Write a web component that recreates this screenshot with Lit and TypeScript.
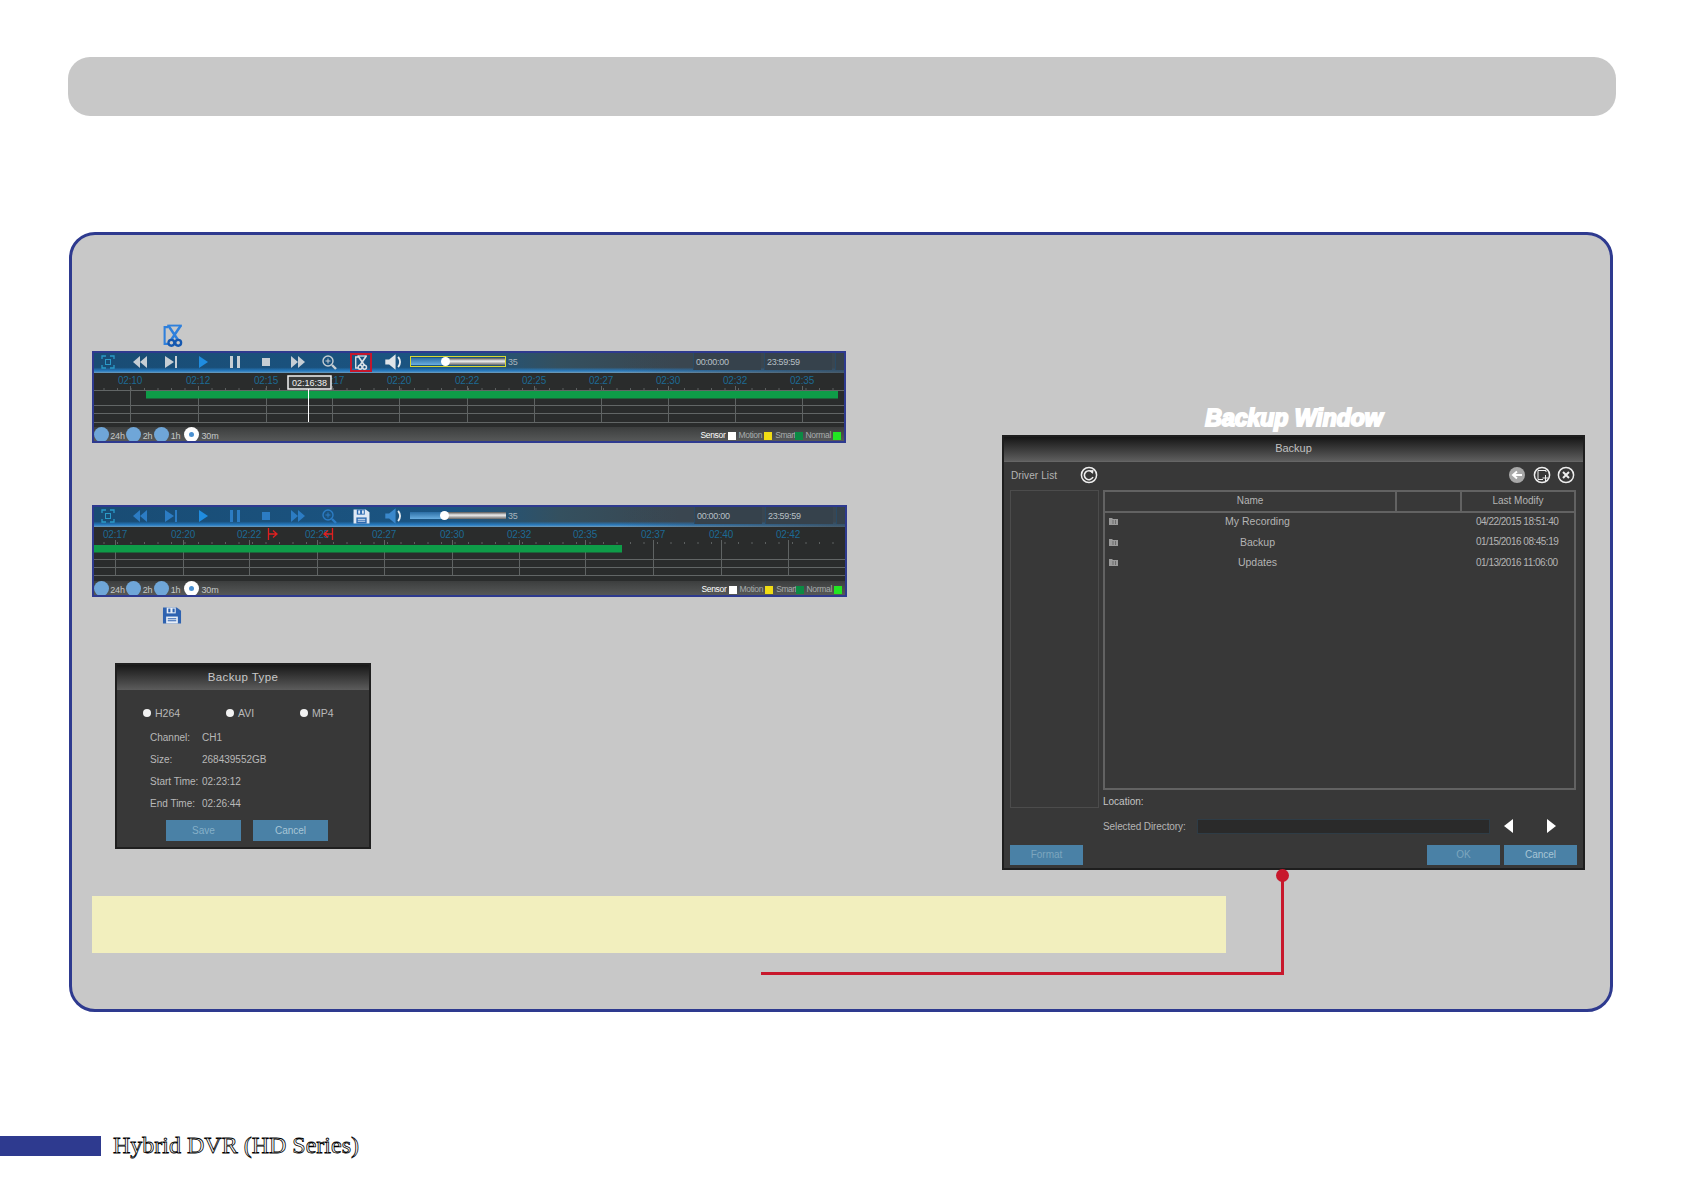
import { LitElement, html, svg, css } from "lit";
import { customElement, property } from "lit/decorators.js";

const ic = (body: unknown, w = 18, h = 16, vb = "0 0 18 16") =>
  html`<svg width=${w} height=${h} viewBox=${vb} aria-hidden="true">${body}</svg>`;

const scissors = (stroke: string, ring: string) => svg`
  <path d="M5 3H1.500v16H5" fill="none" stroke=${stroke} stroke-width="2"/>
  <path d="M5 1.500l9.500 14M17 1.500l-9.500 14" fill="none" stroke=${stroke} stroke-width="2.400"/>
  <path d="M4 1.500h14" stroke=${stroke} stroke-width="1.800"/>
  <circle cx="8" cy="18" r="2.800" fill="none" stroke=${ring} stroke-width="2.200"/>
  <circle cx="14.500" cy="18" r="2.800" fill="none" stroke=${ring} stroke-width="2.200"/>`;

const floppy = (body: string, slot: string) => svg`
  <path d="M1 1h13l4 3v12H1z" fill=${body}/>
  <rect x="4.500" y="1" width="8.500" height="5.500" fill=${slot}/>
  <rect x="6" y="2" width="2" height="3.500" fill=${body}/>
  <rect x="10" y="2" width="2" height="3.500" fill=${body}/>
  <rect x="4" y="9.500" width="11" height="6.500" fill=${slot}/>
  <path d="M5.500 11.500h8M5.500 13.500h8" stroke=${body} stroke-width="1"/>`;

@customElement("dvr-timeline")
class DvrTimeline extends LitElement {
  @property({ type: Boolean }) saved = false;

  static styles = css`
    :host { display: block; box-sizing: border-box; height: 92px; border: 2px solid #2e3a8f; background: #2a2c2c; overflow: hidden; }
    .tools { box-sizing: border-box; height: 20px; padding-bottom: 2px; display: flex; align-items: center;
      background:
        linear-gradient(90deg, rgba(58,70,80,0) 70%, rgba(58,70,80,.75) 100%),
        linear-gradient(180deg, rgba(30,120,190,0) 72%, rgba(40,130,205,.9) 90%, rgba(150,190,215,.7) 100%),
        linear-gradient(90deg, #194c74 0%, #1b5583 48%, #34505f 62%, #3a4650 78%, #3a4650 100%); }
    .slot { width: 31.6px; flex: none; display: flex; justify-content: center; align-items: center; height: 18px; }
    .slot:first-child { margin-left: -1.5px; }
    .cut { box-sizing: border-box; width: 22px; height: 19px; border: 2px solid #c4172c; display: flex; align-items: center; justify-content: center; flex: none; }
    .slider { box-sizing: border-box; width: 96px; height: 11px; flex: none; position: relative; display: flex; align-items: center; margin: -1px 0 0 1.500px; }
    .slider.mark { border: 1px solid #d8d832; }
    .rail { flex: 1; height: 7px; background: linear-gradient(180deg, #555 0%, #eee 45%, #666 100%); }
    .rail i { display: block; width: 36%; height: 100%; background: linear-gradient(180deg, #2c6ea4, #6aaee0); }
    .knob { position: absolute; left: 30px; top: 50%; margin-top: -4.500px; width: 9px; height: 9px; border-radius: 50%; background: #fff; }
    .num { font: 9px "Liberation Sans", sans-serif; letter-spacing: -.3px; color: #a8b4bc; margin-left: 2px; }
    .times { margin-left: auto; display: flex; gap: 3px; height: 17px; align-self: flex-start; }
    .time { box-sizing: border-box; width: 68px; padding-left: 2px; background: #36424c; border-left: 1px solid #2a4a64; font: 9px/18px "Liberation Sans", sans-serif; letter-spacing: -.3px; color: #b8c0c6; }
    .time.end { width: 9px; padding: 0; }
    .track { display: block; }
    .lab { font: 10px "Liberation Sans", sans-serif; fill: #1c6a94; text-anchor: middle; letter-spacing: -.2px; }
    .cur { font: 9px "Liberation Sans", sans-serif; fill: #f0f0f0; text-anchor: middle; }
    .foot { height: 14px; display: flex; align-items: flex-start; justify-content: space-between; overflow: hidden;
      background: linear-gradient(180deg, #3c3e3e, #565858); font: 9px/18px "Liberation Sans", sans-serif; color: #c4c8c8; }
    .zooms { display: flex; align-items: flex-start; }
    .dot { width: 15px; height: 15px; border-radius: 50%; background: #6fa6d8; flex: none; position: relative; }
    .dot.on { background: #fff; margin-left: 2px; }
    .dot.on::after { content: ""; position: absolute; left: 5px; top: 5px; width: 5px; height: 5px; border-radius: 50%; background: #4a90d0; }
    .z { width: 17px; text-align: center; flex: none; letter-spacing: -.2px; }
    .z.n { width: 13px; }
    .z.w { width: 22px; }
    .legend { display: flex; align-items: center; height: 14px; padding: 3px 3px 0 0; box-sizing: border-box; font-size: 8.500px; line-height: 11px; }
    .legend b { font-weight: normal; color: #fff; letter-spacing: -.3px; }
    .legend span { margin-left: 3px; letter-spacing: -.3px; color: #a8acac; }
    .legend i { width: 8px; height: 8px; margin-left: 2px; flex: none; }
    .legend .sm { letter-spacing: -.5px; }
    .legend .gr { margin-left: 0; }
    .legend .no { margin-left: 2px; }
  `;

  render() {
    const s = this.saved;
    const light = s ? "#2c7cc4" : "#c6ced4";
    const labels: [string, number][] = s
      ? [["02:17", 21], ["02:20", 89], ["02:22", 155], ["02:25", 223], ["02:27", 290], ["02:30", 358], ["02:32", 425], ["02:35", 491], ["02:37", 559], ["02:40", 627], ["02:42", 694]]
      : [["02:10", 36], ["02:12", 104], ["02:15", 172], ["02:17", 238], ["02:20", 305], ["02:22", 373], ["02:25", 440], ["02:27", 507], ["02:30", 574], ["02:32", 641], ["02:35", 708]];
    const rows = s ? [32, 40, 48] : [17, 32, 40, 49];
    const bottom = s ? 48 : 49;
    const ticks = Array.from({ length: 56 }, (_, i) => 10 + i * 13.5);
    const tri = (pts: string, fill = light) => svg`<polygon points=${pts} fill=${fill}/>`;
    return html`
      <div class="tools">
        <div class="slot">${ic(svg`<path d="M3 5V2h4M11 2h4v3M15 11v3h-4M7 14H3v-3" fill="none" stroke="#2a9ac8" stroke-width="1.300"/><rect x="6.500" y="5.500" width="5" height="5" fill="none" stroke="#2a9ac8"/>`)}</div>
        <div class="slot">${ic(svg`${tri("9,2 2,8 9,14")}${tri("16,2 9,8 16,14")}`)}</div>
        <div class="slot">${ic(svg`${tri("3,2 12,8 3,14")}<rect x="13" y="2" width="2" height="12" fill=${light}/>`)}</div>
        <div class="slot">${ic(tri("5,2 14,8 5,14", "#1f8ce0"))}</div>
        <div class="slot">${ic(svg`<rect x="4" y="2" width="3" height="12" fill=${light}/><rect x="11" y="2" width="3" height="12" fill=${light}/>`)}</div>
        <div class="slot">${ic(svg`<rect x="5" y="4" width="8" height="8" fill=${light}/>`)}</div>
        <div class="slot">${ic(svg`${tri("2,2 9,8 2,14")}${tri("9,2 16,8 9,14")}`)}</div>
        <div class="slot">${ic(svg`<circle cx="8" cy="7" r="5" fill="none" stroke=${light} stroke-width="1.400"/><path d="M5.500 7h5M8 4.500v5" stroke=${light}/><path d="M12 11l4 4" stroke=${light} stroke-width="2.400"/>`)}</div>
        <div class="slot">${s
          ? ic(floppy("#dfe8f4", "#2c6ab0"), 17, 15, "0.500 0.500 18 16")
          : html`<div class="cut">${ic(scissors("#d8e0e6", "#d8e0e6"), 15, 15, "0 0 20 22")}</div>`}</div>
        <div class="slot">${ic(svg`<path d="M2 6h3l5-4v12l-5-4H2z" fill=${s ? "#3a88cc" : "#dfe4e8"}/><path d="M12 4q3 4 0 8" fill="none" stroke="#e8ecef" stroke-width="1.400"/>`, 18, 18, "1 1 14 14")}</div>
        <div class=${s ? "slider" : "slider mark"}><div class="rail"><i></i></div><div class="knob"></div></div>
        <span class="num">35</span>
        <div class="times"><div class="time">00:00:00</div><div class="time">23:59:59</div><div class="time end"></div></div>
      </div>
      <svg class="track" width="751" height="54" viewBox="0 0 751 54" aria-hidden="false">
        ${ticks.map((x) => svg`<line x1=${x} x2=${x} y1="15" y2="17" stroke="#5c6060"/>`)}
        ${rows.map((y) => svg`<line x1="0" x2="751" y1=${y + 0.5} y2=${y + 0.5} stroke="#626666"/>`)}
        ${labels.map(([, x]) => svg`<line x1=${x + 0.5} x2=${x + 0.5} y1="13" y2=${bottom} stroke="#5f6363"/>`)}
        <rect x=${s ? 0 : 52} y="18" width=${s ? 528 : 692} height="7.500" fill="#0e9c48"/>
        ${labels.map(([t, x]) => svg`<text class="lab" x=${x} y="11">${t}</text>`)}
        ${s
          ? svg`<path d="M174.500 1v12M175 7h8M179 3.500l4 3.500-4 3.500" fill="none" stroke="#e02020" stroke-width="1.300"/>
                <path d="M238.500 1v12M238 7h-8M234 3.500l-4 3.500 4 3.500" fill="none" stroke="#e02020" stroke-width="1.300"/>`
          : svg`<rect x="194" y="3" width="43" height="13" fill="#3a3c3c" stroke="#f4f4f4" stroke-width="1.500"/>
                <text class="cur" x="215.500" y="12.500">02:16:38</text>
                <line x1="214.500" x2="214.500" y1="16" y2="49" stroke="#fff"/>`}
      </svg>
      <div class="foot">
        <div class="zooms">
          <div class="dot"></div><div class="z">24h</div><div class="dot"></div><div class="z n">2h</div><div class="dot"></div><div class="z n">1h</div>
          <div class="dot on"></div><div class="z w">30m</div>
        </div>
        <div class="legend">
          <b>Sensor</b><i style="background:#fff"></i>
          <span>Motion</span><i style="background:#f0dc14"></i>
          <span class="sm">Smart</span><i class="gr" style="background:#0c8a44"></i>
          <span class="no">Normal</span><i style="background:#22e622"></i>
        </div>
      </div>
    `;
  }
}

@customElement("backup-type")
class BackupType extends LitElement {
  static styles = css`
    :host { display: block; box-sizing: border-box; width: 256px; height: 186px; background: #383838; border: 2px solid #1f1f1f; font: 10px "Liberation Sans", sans-serif; color: #b8b8b8; }
    .title { height: 25px; margin-bottom: 1px; background: linear-gradient(180deg, #181818, #5c5c5c); font-size: 11.500px; line-height: 24px; text-align: center; color: #c8c8c8; letter-spacing: .4px; }
    .radios { display: grid; grid-template-columns: 83px 74px 1fr; padding: 15px 0 0 26px; height: 30px; box-sizing: border-box; }
    .r { display: flex; align-items: center; gap: 4px; font-size: 10.500px; height: 14px; }
    .r i { width: 8px; height: 8px; border-radius: 50%; background: #f2f2f2; flex: none; }
    .rows { display: grid; grid-template-columns: 52px 1fr; grid-auto-rows: 22px; padding: 5px 0 0 33px; align-items: center; }
    .rows div { white-space: nowrap; }
    .btns { display: flex; gap: 12px; margin: 6px 0 0 49px; }
    .btn { width: 75px; height: 21px; background: #4a81a6; text-align: center; line-height: 21px; color: #85b0c8; }
    .btn.c { color: #a8c6d6; }
  `;
  render() {
    return html`
      <div class="title">Backup Type</div>
      <div class="radios">
        <div class="r"><i></i>H264</div><div class="r"><i></i>AVI</div><div class="r"><i></i>MP4</div>
      </div>
      <div class="rows">
        <div>Channel:</div><div>CH1</div>
        <div>Size:</div><div>268439552GB</div>
        <div>Start Time:</div><div>02:23:12</div>
        <div>End Time:</div><div>02:26:44</div>
      </div>
      <div class="btns"><div class="btn">Save</div><div class="btn c">Cancel</div></div>
    `;
  }
}

const folder = html`<svg width="9" height="8" viewBox="0 0 9 8" aria-hidden="true"><path d="M0 1h3l1 1h5v6H0z" fill="#9a9a9a"/><path d="M4 3v4M6.500 3v4" stroke="#6c6c6c"/></svg>`;

@customElement("backup-window")
class BackupWindow extends LitElement {
  static styles = css`
    :host { display: block; box-sizing: border-box; width: 583px; height: 435px; background: #383838; border: 2px solid #1e1e1e; font: 10px "Liberation Sans", sans-serif; color: #b4b4b4; }
    .title { height: 24px; background: linear-gradient(180deg, #161616, #5e5e5e); border-bottom: 1px solid #666; text-align: center; font-size: 11px; line-height: 22px; color: #c0c0c0; }
    .bar { box-sizing: border-box; height: 28px; display: flex; align-items: center; padding: 0 8px 2px 7px; letter-spacing: .1px; }
    .bar .lead { width: 69px; }
    .bar .tools { margin-left: auto; display: flex; gap: 6.500px; }
    .main { display: flex; gap: 4px; padding-left: 6px; height: 348px; }
    .tree { box-sizing: border-box; width: 89px; height: 318px; border: 1px solid #4c4c4c; }
    .right { width: 473px; }
    .table { box-sizing: border-box; height: 300px; border: 2px solid #626262; }
    .head { display: grid; grid-template-columns: 290px 65px 1fr; height: 19px; border-bottom: 2px solid #626262; line-height: 17px; text-align: center; }
    .head div + div { border-left: 2px solid #626262; }
    .rows { margin-top: -2px; }
    .row { display: grid; grid-template-columns: 20px 265px 86px 1fr; align-items: center; height: 20.500px; font-size: 10.500px; }
    .row .n { text-align: center; }
    .row .d { font-size: 10px; letter-spacing: -.5px; white-space: nowrap; }
    .row svg { margin-left: 4px; display: block; }
    .loc { height: 24px; line-height: 24px; color: #c4c4c4; }
    .dir { display: flex; align-items: center; height: 24px; }
    .dir label { width: 94px; flex: none; letter-spacing: -.1px; }
    .dir .in { box-sizing: border-box; width: 293px; height: 15px; background: #2a2a2a; border: 1px solid #2e3c46; }
    .arrows { display: flex; gap: 32px; margin-left: 14px; }
    .foot { display: flex; margin-top: 7px; padding: 0 6px; gap: 4px; }
    .btn { width: 73px; height: 20px; background: #4a81a6; text-align: center; line-height: 20px; color: #7ca6be; }
    .btn.f { margin-right: auto; }
    .btn.c { color: #a8c6d6; }
  `;
  render() {
    const circle = (inner: unknown) => html`<svg width="18" height="18" viewBox="0 0 18 18" aria-hidden="true"><circle cx="9" cy="9" r="7.600" fill="none" stroke="#eee" stroke-width="1.500"/>${inner}</svg>`;
    const data = [["My Recording", "04/22/2015 18:51:40"], ["Backup", "01/15/2016 08:45:19"], ["Updates", "01/13/2016 11:06:00"]];
    return html`
      <div class="title">Backup</div>
      <div class="bar">
        <div class="lead">Driver List</div>
        ${circle(svg`<path d="M12.500 6.500A4.500 4.500 0 1 0 13 11" fill="none" stroke="#eee" stroke-width="1.600"/><path d="M9.500 4.500l4-.5-.5 4z" fill="#eee"/>`)}
        <div class="tools">
          <svg width="18" height="18" viewBox="0 0 18 18" aria-hidden="true"><circle cx="9" cy="9" r="8" fill="#a8a8a8"/><path d="M14 9H6M9 5.500L5 9l4 3.500" fill="none" stroke="#fff" stroke-width="2"/></svg>
          ${circle(svg`<path d="M13 6V4.500H5v9h5" fill="none" stroke="#eee"/><path d="M12.500 9v6M9.500 12h6" stroke="#eee"/>`)}
          ${circle(svg`<path d="M6 6l6 6M12 6l-6 6" stroke="#eee" stroke-width="2"/>`)}
        </div>
      </div>
      <div class="main">
        <div class="tree"></div>
        <div class="right">
          <div class="table">
            <div class="head"><div>Name</div><div></div><div>Last Modify</div></div>
            <div class="rows">
              ${data.map(([n, d]) => html`<div class="row"><div>${folder}</div><div class="n">${n}</div><div></div><div class="d">${d}</div></div>`)}
            </div>
          </div>
          <div class="loc">Location:</div>
          <div class="dir">
            <label>Selected Directory:</label><div class="in"></div>
            <div class="arrows">
              <svg width="10" height="14" viewBox="0 0 10 14" aria-hidden="true"><polygon points="9,0 0,7 9,14" fill="#fff"/></svg>
              <svg width="10" height="14" viewBox="0 0 10 14" aria-hidden="true"><polygon points="1,0 10,7 1,14" fill="#fff"/></svg>
            </div>
          </div>
        </div>
      </div>
      <div class="foot"><div class="btn f">Format</div><div class="btn">OK</div><div class="btn c">Cancel</div></div>
    `;
  }
}

@customElement("app-root")
class AppRoot extends LitElement {
  static styles = css`
    :host { display: block; width: 1684px; height: 1191px; background: #fff; overflow: hidden; font-family: "Liberation Sans", sans-serif; }
    .page { padding: 57px 68px 0; }
    .banner { height: 59px; border-radius: 22px; background: #c8c8c8; }
    .panel { box-sizing: border-box; width: 1544px; height: 780px; margin: 116px 0 0 1px; padding: 89px 25px 0 19px; border: 3px solid #2e3a8f; border-radius: 26px; background: #c8c8c8; position: relative; }
    .upper { display: flex; justify-content: space-between; }
    .left { width: 755px; padding: 0 0 22px 1px; }
    .ico { display: block; height: 23px; margin: 0 0 4px 71px; }
    .t1 { width: 754px; }
    .t2 { margin-top: 62px; }
    .ico2 { display: block; height: 17px; margin: 10px 0 0 70px; }
    backup-type { margin: 39px 0 -1px 23px; }
    .rightcol { align-self: flex-end; }
    .wintitle { height: 31px; text-align: center; font: italic bold 23px/28px "Liberation Sans", sans-serif; color: #fff; -webkit-text-stroke: 2px #fff; padding-left: 1px; margin-top: -1px; }
    .note { width: 1134px; height: 57px; margin: 26px 0 0 1px; background: #f2efbe; }
    .wire { position: absolute; left: 689px; top: 640px; width: 523px; height: 100px; box-sizing: border-box; border-right: 3px solid #c8182c; border-bottom: 3px solid #c8182c; }
    .wire::before { content: ""; position: absolute; right: -8px; top: -6px; width: 13px; height: 13px; border-radius: 50%; background: #c8182c; }
    .footer { display: flex; align-items: center; gap: 12px; margin-top: 124px; height: 20px; }
    .fbar { width: 101px; height: 20px; background: #2e3a8f; }
    .ftext { font: 24px/24px "Liberation Serif", serif; margin-top: -2px; color: #fff; -webkit-text-stroke: .8px #000; white-space: nowrap; }
  `;
  render() {
    return html`
      <div class="page">
        <div class="banner"></div>
        <div class="panel">
          <div class="upper">
            <div class="left">
              <svg class="ico" width="21" height="23" viewBox="0 0 20 22" aria-hidden="true">${scissors("#2f80dc", "#1558b0")}</svg>
              <dvr-timeline class="t1"></dvr-timeline>
              <dvr-timeline class="t2" saved></dvr-timeline>
              <svg class="ico2" width="20" height="17" viewBox="0.500 0.500 18 16" aria-hidden="true">${floppy("#2e62b0", "#e8eef6")}</svg>
              <backup-type></backup-type>
            </div>
            <div class="rightcol">
              <div class="wintitle">Backup Window</div>
              <backup-window></backup-window>
            </div>
          </div>
          <div class="note"></div>
          <div class="wire"></div>
        </div>
      </div>
      <div class="footer"><div class="fbar"></div><div class="ftext">Hybrid DVR (HD Series)</div></div>
    `;
  }
}
